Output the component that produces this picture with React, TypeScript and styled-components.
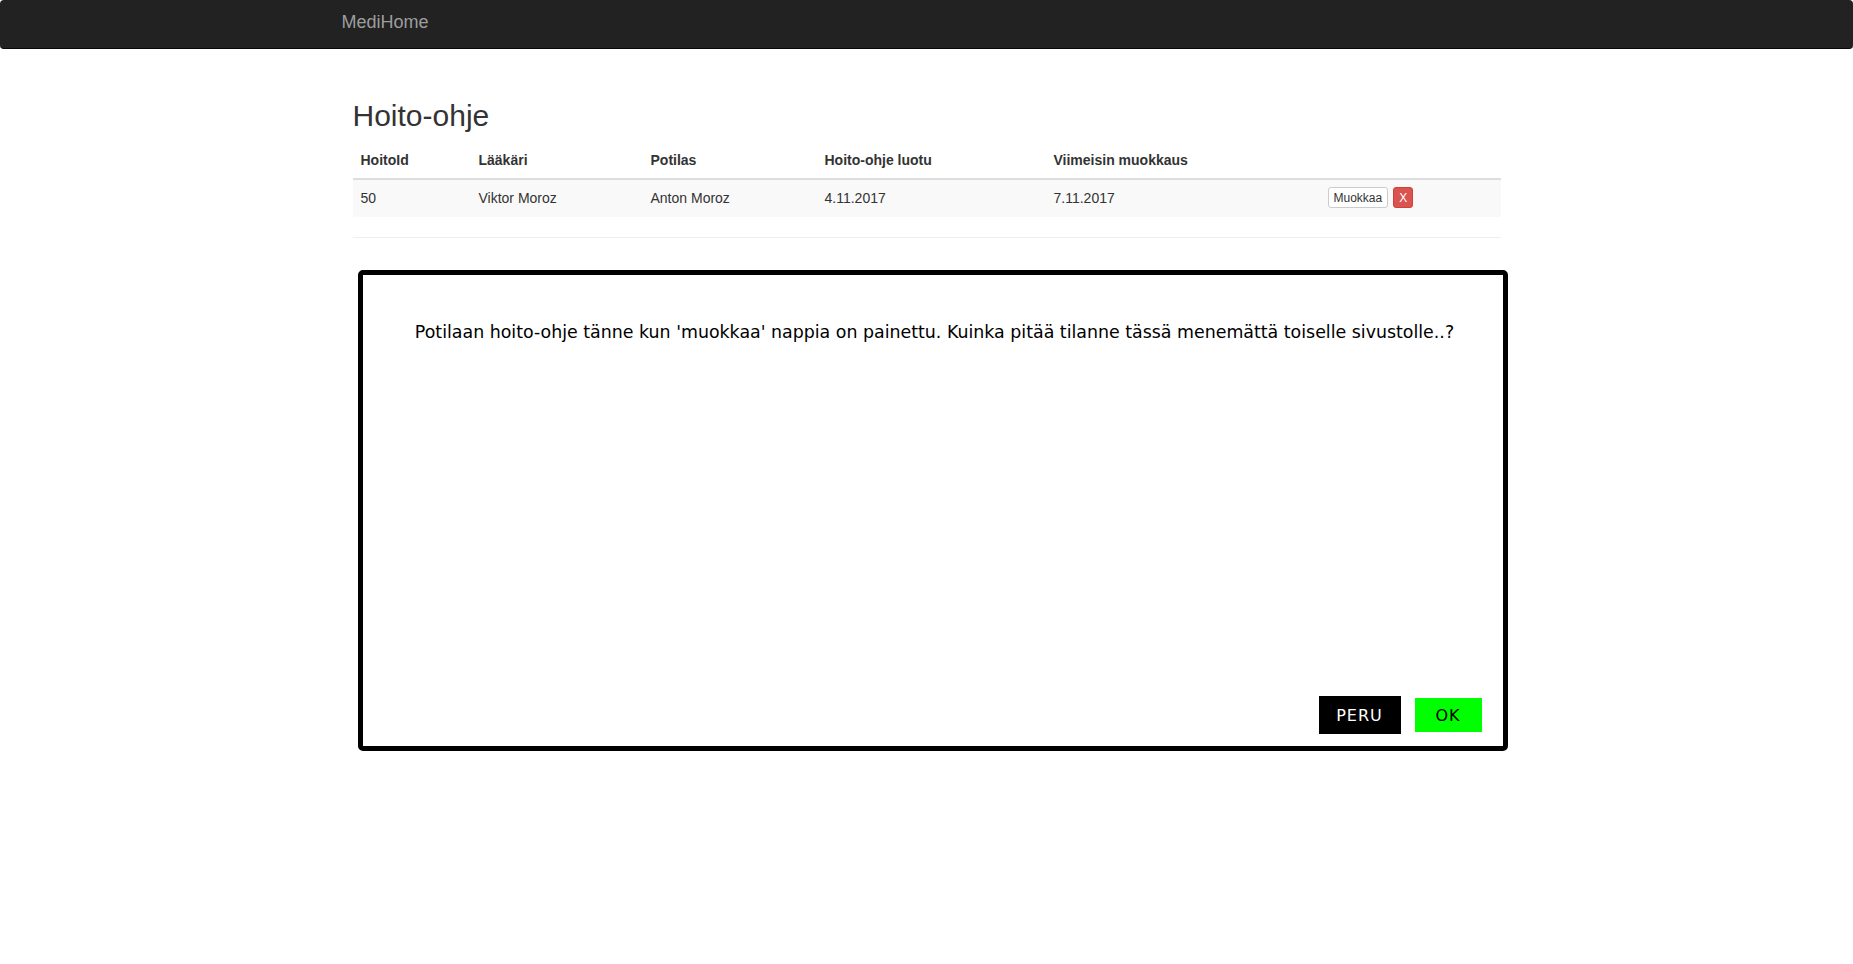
import styled, { createGlobalStyle } from "styled-components";

const GlobalStyle = createGlobalStyle`
    * {
        box-sizing: border-box;
    }
    body {
        margin: 0;
        background: #fff;
        font-family: "Liberation Sans", Arial, sans-serif;
        font-size: 14px;
        line-height: 1.42857;
        color: #333;
    }
`

const Navbar = styled.nav`
    height: 49px;
    background-color: #222;
    border-bottom: 1px solid #080808;
    border-radius: 4px;
`

const NavContainer = styled.div`
    width: 1170px;
    margin: 0 auto;
    display: flex;
    align-items: center;
    height: 100%;
`

const Brand = styled.a`
    font-size: 18px;
    line-height: 20px;
    color: #9d9d9d;
    text-decoration: none;
    margin-top: -4px;
`

const Main = styled.main`
    width: 1148px;
    margin: 0 auto;
    padding-top: 50px;
`

const Title = styled.h2`
    font-size: 30px;
    font-weight: 500;
    line-height: 1.1;
    margin: 0 0 10px;
    color: #333;
`

const Table = styled.table`
    width: 100%;
    border-collapse: collapse;
    border-spacing: 0;
    margin-bottom: 20px;
`

const Th = styled.th<{ $w?: number }>`
    text-align: left;
    padding: 8px;
    font-weight: bold;
    line-height: 20px;
    border-bottom: 2px solid #ddd;
    width: ${p => (p.$w ? `${p.$w}px` : "auto")};
`

const Row = styled.tr`
    background-color: #f9f9f9;
`

const Td = styled.td`
    padding: 7px 8px 9px;
    line-height: 20px;
    vertical-align: middle;
`

const Actions = styled.div`
    display: flex;
    gap: 5px;
`

const SmallButton = styled.button<{ $danger?: boolean }>`
    font-family: "Liberation Sans", Arial, sans-serif;
    font-size: 12px;
    line-height: 1.5;
    padding: 1px 5px;
    border-radius: 3px;
    border: 1px solid ${p => (p.$danger ? "#d43f3a" : "#ccc")};
    background-color: ${p => (p.$danger ? "#d9534f" : "#fff")};
    color: ${p => (p.$danger ? "#fff" : "#333")};
    height: 21px;
    display: flex;
    align-items: center;
    cursor: pointer;
`

const Divider = styled.hr`
    margin: 20px 0 0;
    border: 0;
    border-top: 1px solid #eee;
`

const Dialog = styled.section`
    margin: 32px 0 0 5px;
    width: 1150px;
    height: 481px;
    border: 5px solid #000;
    border-radius: 5px;
    display: flex;
    flex-direction: column;
    font-family: "DejaVu Sans", Verdana, sans-serif;
    color: #000;
`

const Message = styled.p`
    margin: 0;
    padding: 46px 0 0 4px;
    text-align: center;
    font-size: 17.4px;
    line-height: 22px;
`

const ButtonRow = styled.div`
    margin-top: auto;
    display: flex;
    justify-content: flex-end;
    align-items: center;
    gap: 14px;
    padding: 0 21px 12px 0;
`

const DialogButton = styled.button<{ $ok?: boolean }>`
    font-family: "DejaVu Sans", Verdana, sans-serif;
    font-size: 16px;
    letter-spacing: 1px;
    width: ${p => (p.$ok ? "67px" : "82px")};
    height: ${p => (p.$ok ? "34px" : "38px")};
    border: ${p => (p.$ok ? "none" : "2px solid #000")};
    background-color: ${p => (p.$ok ? "#00ff00" : "#000")};
    color: ${p => (p.$ok ? "#000" : "#fff")};
    display: flex;
    align-items: center;
    justify-content: center;
    padding: 0;
    cursor: pointer;
`

const columns = [
    { label: "HoitoId", w: 118 },
    { label: "Lääkäri", w: 172 },
    { label: "Potilas", w: 174 },
    { label: "Hoito-ohje luotu", w: 229 },
    { label: "Viimeisin muokkaus", w: 274 },
    { label: "" },
];

const App = () => {
    return (
        <>
            <GlobalStyle />
            <Navbar>
                <NavContainer>
                    <Brand href="#">MediHome</Brand>
                </NavContainer>
            </Navbar>
            <Main>
                <Title>Hoito-ohje</Title>
                <Table>
                    <thead>
                        <tr>
                            {columns.map((c, i) => (
                                <Th key={i} $w={c.w}>{c.label}</Th>
                            ))}
                        </tr>
                    </thead>
                    <tbody>
                        <Row>
                            <Td>50</Td>
                            <Td>Viktor Moroz</Td>
                            <Td>Anton Moroz</Td>
                            <Td>4.11.2017</Td>
                            <Td>7.11.2017</Td>
                            <Td>
                                <Actions>
                                    <SmallButton>Muokkaa</SmallButton>
                                    <SmallButton $danger>X</SmallButton>
                                </Actions>
                            </Td>
                        </Row>
                    </tbody>
                </Table>
                <Divider />
                <Dialog>
                    <Message>
                        Potilaan hoito-ohje tänne kun 'muokkaa' nappia on painettu. Kuinka pitää tilanne tässä menemättä toiselle sivustolle..?
                    </Message>
                    <ButtonRow>
                        <DialogButton>PERU</DialogButton>
                        <DialogButton $ok>OK</DialogButton>
                    </ButtonRow>
                </Dialog>
            </Main>
        </>
    );
}

export default App;
